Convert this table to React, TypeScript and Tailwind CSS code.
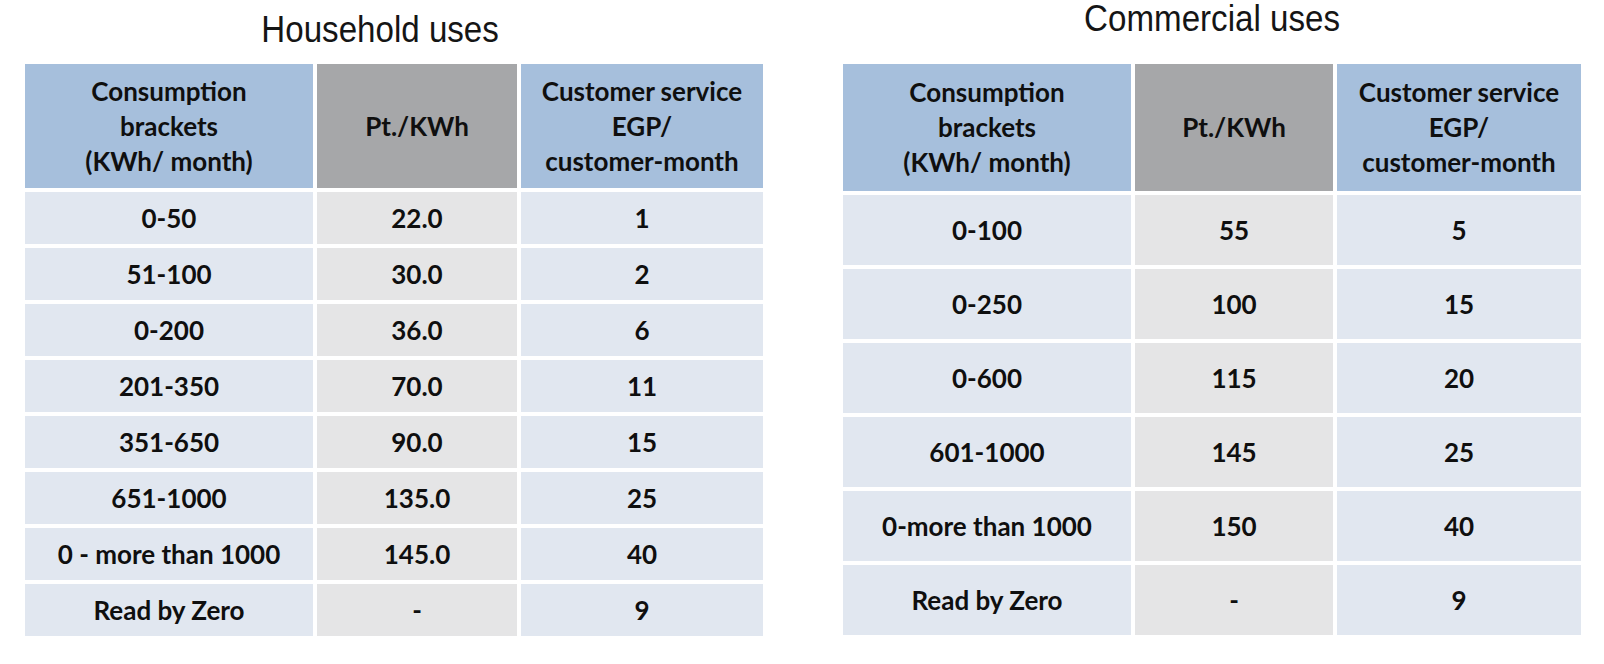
const householdRows = [
  ['0-50', '22.0', '1'],
  ['51-100', '30.0', '2'],
  ['0-200', '36.0', '6'],
  ['201-350', '70.0', '11'],
  ['351-650', '90.0', '15'],
  ['651-1000', '135.0', '25'],
  ['0 - more than 1000', '145.0', '40'],
  ['Read by Zero', '-', '9'],
];

const commercialRows = [
  ['0-100', '55', '5'],
  ['0-250', '100', '15'],
  ['0-600', '115', '20'],
  ['601-1000', '145', '25'],
  ['0-more than 1000', '150', '40'],
  ['Read by Zero', '-', '9'],
];

type TableProps = {
  rows: string[][];
  cols: string;
  headerH: string;
  rowH: string;
};

const TariffTable = ({ rows, cols, headerH, rowH }: TableProps) => {
  return (
    <div className={`grid ${cols} gap-[4px] font-['Lato',sans-serif] font-bold text-[26px] text-[#0f0f0f]`}>
      <div className={`${headerH} bg-[#a6bfdc] flex items-center justify-center text-center leading-[35px]`}>
        <div>
          Consumption
          <br />
          brackets
          <br />
          (KWh/ month)
        </div>
      </div>
      <div className={`${headerH} bg-[#a6a7a9] flex items-center justify-center leading-[35px]`}>
        Pt./KWh
      </div>
      <div className={`${headerH} bg-[#a6bfdc] flex items-center justify-center text-center leading-[35px]`}>
        <div>
          Customer service
          <br />
          EGP/
          <br />
          customer-month
        </div>
      </div>
      {rows.map((row) => (
        <div key={row[0] + row[1]} className="contents">
          <div className={`${rowH} bg-[#e1e7f0] flex items-center justify-center`}>{row[0]}</div>
          <div className={`${rowH} bg-[#e5e5e6] flex items-center justify-center`}>{row[1]}</div>
          <div className={`${rowH} bg-[#e1e7f0] flex items-center justify-center`}>{row[2]}</div>
        </div>
      ))}
    </div>
  );
};

export default function App() {
  return (
    <div className="w-[1604px] h-[664px] bg-white flex pl-[25px]">
      <div className="w-[738px] flex flex-col">
        <div className="h-[64px] pt-[10px] pr-[28px] flex justify-center">
          <span className="inline-block scale-x-[0.92] font-['Liberation_Sans',Arial,sans-serif] text-[36px] leading-[40px] text-[#151515]">
            Household uses
          </span>
        </div>
        <TariffTable
          rows={householdRows}
          cols="grid-cols-[288px_200px_242px]"
          headerH="h-[124px]"
          rowH="h-[52px]"
        />
      </div>
      <div className="w-[738px] ml-[80px] flex flex-col">
        <div className="h-[64px] flex justify-center">
          <span className="inline-block scale-x-[0.92] font-['Liberation_Sans',Arial,sans-serif] text-[36px] leading-[38px] text-[#151515]">
            Commercial uses
          </span>
        </div>
        <TariffTable
          rows={commercialRows}
          cols="grid-cols-[288px_198px_244px]"
          headerH="h-[127px]"
          rowH="h-[70px]"
        />
      </div>
    </div>
  );
}
